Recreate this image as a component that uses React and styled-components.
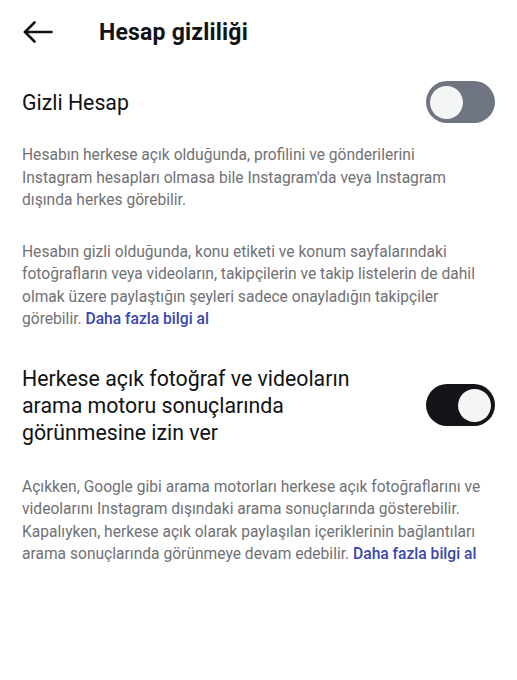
import React from 'react'
import styled, { createGlobalStyle } from 'styled-components'

const GlobalStyle = createGlobalStyle`
  body {
    margin: 0;
    background: #ffffff;
    font-family: Roboto, "Noto Sans", sans-serif;
    color: #111214;
  }
`

const Page = styled.div`
  width: 517px;
  min-height: 680px;
  background: #ffffff;
`

const Header = styled.header`
  height: 64px;
  display: flex;
  align-items: center;
  padding: 0 22px 0 23px;
`

const BackButton = styled.button`
  border: 0;
  background: none;
  padding: 0;
  width: 30px;
  height: 24px;
  display: flex;
  align-items: center;
  cursor: pointer;
  margin-right: 46px;
`

const Title = styled.h1`
  margin: 0;
  font-size: 23px;
  font-weight: 700;
  letter-spacing: 0.2px;
`

const Content = styled.main`
  padding: 0 22px;
`

const SettingRow = styled.div`
  display: flex;
  align-items: center;
  justify-content: space-between;
  min-height: ${p => p.$height || 0}px;
  margin-top: ${p => p.$top || 0}px;
`

const SettingLabel = styled.div`
  font-size: 21.3px;
  line-height: 27px;
  color: #111214;
  max-width: 360px;
`

const Switch = styled.button`
  flex: none;
  width: 69px;
  height: 42px;
  border-radius: 21px;
  border: 0;
  padding: 4px;
  display: flex;
  justify-content: ${p => (p.$on ? 'flex-end' : 'flex-start')};
  align-items: center;
  background: ${p => (p.$on ? '#131417' : '#6f7580')};
  cursor: pointer;
`

const Knob = styled.span`
  width: 33px;
  height: 33px;
  border-radius: 50%;
  background: #f4f5f5;
`

const Paragraph = styled.p`
  margin: ${p => p.$top || 0}px 0 0;
  max-width: ${p => (p.$width ? `${p.$width}px` : 'none')};
  font-size: 15.6px;
  line-height: 22.5px;
  color: #707175;
`

const Link = styled.a`
  color: #3a46ae;
  font-weight: 500;
  text-decoration: none;
`

const BackArrow = () => (
  <svg width="30" height="22" viewBox="0 0 30 22" fill="none" stroke="#111214" strokeWidth="2.6" strokeLinecap="round" strokeLinejoin="round">
    <path d="M28.5 11H2" />
    <path d="M11.5 1.5L2 11l9.5 9.5" />
  </svg>
)

export default function App() {
  return (
    <Page>
      <GlobalStyle />
      <Header>
        <BackButton aria-label="Geri">
          <BackArrow />
        </BackButton>
        <Title>Hesap gizliliği</Title>
      </Header>
      <Content>
        <SettingRow $height={76}>
          <SettingLabel>Gizli Hesap</SettingLabel>
          <Switch aria-label="Gizli Hesap">
            <Knob />
          </Switch>
        </SettingRow>
        <Paragraph $top={4} $width={445}>
          Hesabın herkese açık olduğunda, profilini ve gönderilerini Instagram hesapları olmasa bile Instagram'da veya Instagram dışında herkes görebilir.
        </Paragraph>
        <Paragraph $top={29}>
          Hesabın gizli olduğunda, konu etiketi ve konum sayfalarındaki fotoğrafların veya videoların, takipçilerin ve takip listelerin de dahil olmak üzere paylaştığın şeyleri sadece onayladığın takipçiler görebilir. <Link href="#">Daha fazla bilgi al</Link>
        </Paragraph>
        <SettingRow $top={34}>
          <SettingLabel>Herkese açık fotoğraf ve videoların arama motoru sonuçlarında görünmesine izin ver</SettingLabel>
          <Switch $on aria-label="Arama motoru">
            <Knob />
          </Switch>
        </SettingRow>
        <Paragraph $top={30}>
          Açıkken, Google gibi arama motorları herkese açık fotoğraflarını ve videolarını Instagram dışındaki arama sonuçlarında gösterebilir. Kapalıyken, herkese açık olarak paylaşılan içeriklerinin bağlantıları arama sonuçlarında görünmeye devam edebilir. <Link href="#">Daha fazla bilgi al</Link>
        </Paragraph>
      </Content>
    </Page>
  )
}
